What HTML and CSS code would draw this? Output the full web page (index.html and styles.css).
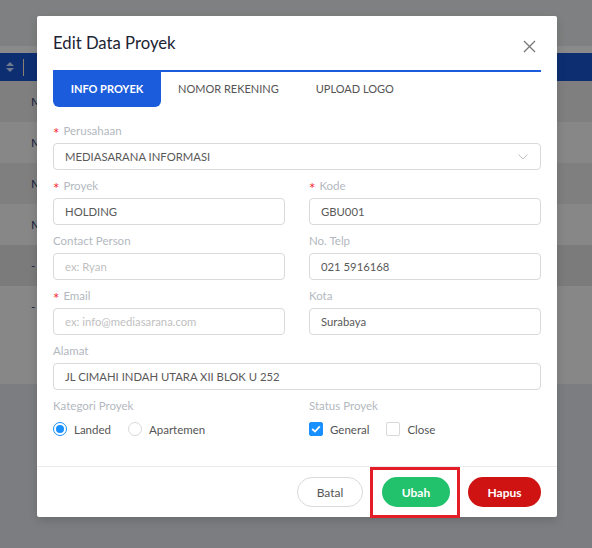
FILE: index.html
```html
<!DOCTYPE html>
<html>
<head>
<meta charset="utf-8">
<link rel="stylesheet" href="styles.css">
</head>
<body>
<div class="page">
  <div class="bg-top"></div>
  <div class="bg-strip"></div>
  <div class="bg-head">
    <svg class="sort" width="10" height="12" viewBox="0 0 10 12"><path d="M1 5 L5 1 L9 5 Z M1 7 L5 11 L9 7 Z" fill="#6f7a8f"/></svg>
    <span class="bar"></span>
  </div>
  <div class="row r1"><span class="cell">M</span></div>
  <div class="row r2"><span class="cell">M</span></div>
  <div class="row r1"><span class="cell">M</span></div>
  <div class="row r2"><span class="cell">M</span></div>
  <div class="row r3"><span class="cell">-</span></div>
  <div class="row r2 tall"><span class="cell">-</span></div>
  <div class="bg-bottom"></div>

  <div class="modal">
    <div class="modal-head">
      <h1 class="title">Edit Data Proyek</h1>
      <svg class="close" width="13" height="13" viewBox="0 0 13 13"><path d="M1 1 L12 12 M12 1 L1 12" stroke="#777" stroke-width="1.3" fill="none"/></svg>
    </div>
    <div class="tabs">
      <div class="tab active">INFO PROYEK</div>
      <div class="tab">NOMOR REKENING</div>
      <div class="tab">UPLOAD LOGO</div>
    </div>
    <div class="form">
      <div class="field full">
        <label class="lbl"><span class="req">*</span>Perusahaan</label>
        <div class="input select">MEDIASARANA INFORMASI
          <svg class="chev" width="10" height="6" viewBox="0 0 10 6"><path d="M0.5 0.5 L5 5 L9.5 0.5" stroke="#bfbfbf" stroke-width="1" fill="none"/></svg>
        </div>
      </div>
      <div class="grid">
        <div class="field">
          <label class="lbl"><span class="req">*</span>Proyek</label>
          <div class="input">HOLDING</div>
        </div>
        <div class="field">
          <label class="lbl"><span class="req">*</span>Kode</label>
          <div class="input">GBU001</div>
        </div>
        <div class="field">
          <label class="lbl">Contact Person</label>
          <div class="input ph">ex: Ryan</div>
        </div>
        <div class="field">
          <label class="lbl">No. Telp</label>
          <div class="input">021 5916168</div>
        </div>
        <div class="field">
          <label class="lbl"><span class="req">*</span>Email</label>
          <div class="input ph">ex: info@mediasarana.com</div>
        </div>
        <div class="field">
          <label class="lbl">Kota</label>
          <div class="input">Surabaya</div>
        </div>
      </div>
      <div class="field full">
        <label class="lbl">Alamat</label>
        <div class="input">JL CIMAHI INDAH UTARA XII BLOK U 252</div>
      </div>
      <div class="grid">
        <div class="field">
          <label class="lbl">Kategori Proyek</label>
          <div class="opts">
            <span class="opt"><span class="radio on"></span>Landed</span>
            <span class="opt"><span class="radio"></span>Apartemen</span>
          </div>
        </div>
        <div class="field">
          <label class="lbl">Status Proyek</label>
          <div class="opts">
            <span class="opt"><span class="check on"><svg width="10" height="8" viewBox="0 0 10 8"><path d="M1.2 4 L4 6.6 L8.8 1.4" stroke="#fff" stroke-width="1.8" fill="none"/></svg></span>General</span>
            <span class="opt"><span class="check"></span>Close</span>
          </div>
        </div>
      </div>
    </div>
    <div class="footer">
      <button class="btn ghost">Batal</button>
      <button class="btn green">Ubah</button>
      <button class="btn red">Hapus</button>
    </div>
    <div class="highlight"></div>
  </div>
</div>
</body>
</html>
```
FILE: styles.css
```css
* { box-sizing: border-box; }
html, body { margin: 0; padding: 0; }
body { width: 592px; height: 548px; overflow: hidden; font-family: Lato, "Noto Sans", sans-serif; }
.page { position: relative; width: 592px; height: 548px; background: #7c7d80; display: flex; flex-direction: column; }
.bg-top { height: 46px; background: #7f8081; }
.bg-strip { height: 7px; background: #8a8a8a; }
.bg-head { height: 28px; background: #0d2f72; display: flex; align-items: center; padding-left: 5px; }
.sort { display: block; }
.bar { width: 1px; height: 17px; background: #8a7f70; margin-left: 8px; }
.row { display: flex; align-items: center; padding-left: 31px; font-size: 12px; color: #1a2540; }
.r1 { height: 41px; background: #7f7f7f; }
.r2 { height: 41px; background: #878787; }
.r3 { height: 41px; background: #7b7b7b; }
.row.tall { height: 98px; align-items: flex-start; padding-top: 13px; }
.bg-bottom { flex: 1; background: #7c7d80; }

.modal { position: absolute; left: 37px; top: 16px; width: 520px; height: 501px; background: #fff; border-radius: 2px; box-shadow: 0 3px 10px rgba(0,0,0,0.15); display: flex; flex-direction: column; }
.modal-head { height: 54px; display: flex; align-items: center; justify-content: space-between; padding: 0 21px 0 16px; }
.title { margin: 0; font-size: 16.7px; font-weight: 400; color: #1c2433; margin-top: -1px; }
.close { display: block; margin-top: 6px; }
.tabs { margin: 0 16px; border-top: 2px solid #1a5cdb; display: flex; height: 37px; }
.tab { font-size: 11px; color: #555; display: flex; align-items: center; padding: 0 17px; margin-top: -2px; }
.tab.active { background: #1a5cdb; color: #fff; font-weight: 700; border-radius: 0 0 6px 6px; width: 108px; justify-content: center; padding: 0; }
.tab:nth-child(2) { padding-left: 17px; padding-right: 18px; }
.tab:nth-child(3) { padding-left: 19px; }

.form { padding: 16px 16px 0; flex: 1; display: flex; flex-direction: column; gap: 8px; }
.grid { display: grid; grid-template-columns: 232px 232px; column-gap: 24px; row-gap: 8px; }
.field { display: flex; flex-direction: column; }
.lbl { font-size: 11.5px; line-height: 16px; height: 16px; color: #b3b8c0; margin-bottom: 4px; display: flex; align-items: center; }
.req { color: #f5222d; margin-right: 4px; font-size: 15px; line-height: 16px; position: relative; top: 2px; }
.input { height: 27px; border: 1px solid #d9d9d9; border-radius: 4px; font-size: 11.3px; color: #595959; padding: 0 11px; display: flex; align-items: center; position: relative; }
.input.ph { color: #bfbfbf; }
.select { justify-content: space-between; }
.chev { display: block; margin-right: 1px; }
.opts { display: flex; align-items: center; gap: 17px; margin-top: 2px; height: 18px; }
.opt { display: flex; align-items: center; font-size: 11.5px; color: #555; }
.radio { width: 14px; height: 14px; border: 1px solid #d9d9d9; border-radius: 50%; margin-right: 7px; position: relative; }
.radio.on { border-color: #1890ff; }
.radio.on::after { content: ""; position: absolute; left: 2px; top: 2px; width: 8px; height: 8px; border-radius: 50%; background: #1890ff; }
.check { width: 14px; height: 14px; border: 1px solid #d9d9d9; border-radius: 2px; margin-right: 7px; display: flex; align-items: center; justify-content: center; }
.check.on { background: #1890ff; border-color: #1890ff; }
.check svg { display: block; }

.footer { height: 51px; border-top: 1px solid #ececec; display: flex; align-items: center; justify-content: flex-end; padding: 0 16px; gap: 18px; }
.btn { height: 30px; border-radius: 15px; font-family: Lato, "Noto Sans", sans-serif; font-size: 12px; border: 1px solid transparent; padding: 0; cursor: pointer; }
.btn.ghost { width: 66px; background: #fff; border-color: #d9d9d9; color: #555; margin-right: 1px; }
.btn.green { width: 68px; background: #22c16b; color: #fff; font-weight: 700; }
.btn.red { width: 73px; background: #cf1313; color: #fff; font-weight: 700; }
.highlight { position: absolute; left: 333px; top: 451px; width: 90px; height: 51px; border: 3px solid #e31e26; pointer-events: none; }
```
